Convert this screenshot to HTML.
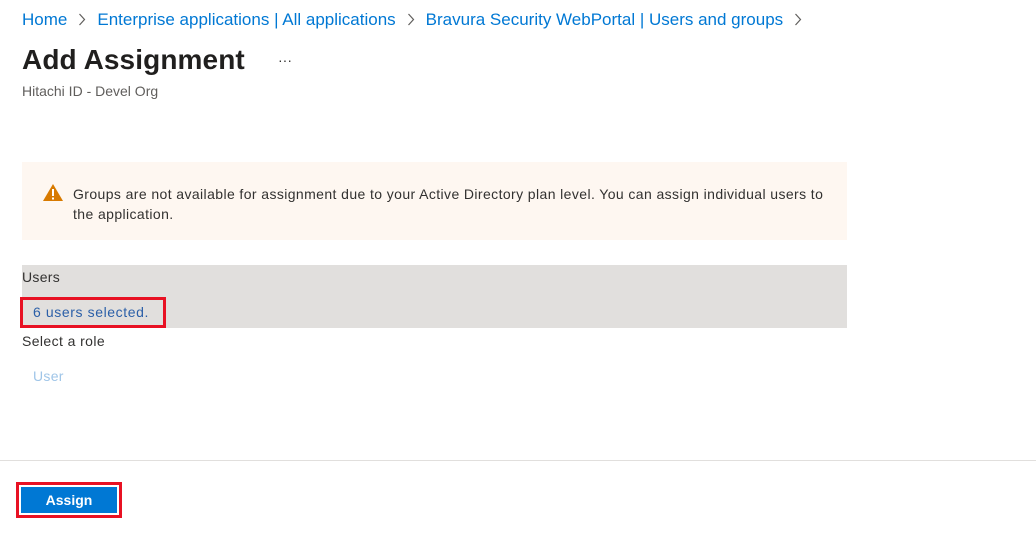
<!DOCTYPE html>
<html><head><style>
body{margin:0;width:1036px;height:540px;background:#fff;font-family:"Liberation Sans",sans-serif;position:relative;overflow:hidden;color:#323130}
.a{position:absolute;white-space:nowrap}
.c{display:inline-block;vertical-align:middle;margin:0 11px 3px 11px}
</style></head><body>
<div class="a" style="left:22px;top:10px;font-size:17px;color:#0078d4;">Home<svg class="c" width="8" height="13" viewBox="0 0 8 13"><path d="M1.5 1 L6.5 6.5 L1.5 12" fill="none" stroke="#605e5c" stroke-width="1.2"/></svg>Enterprise applications | All applications<svg class="c" width="8" height="13" viewBox="0 0 8 13"><path d="M1.5 1 L6.5 6.5 L1.5 12" fill="none" stroke="#605e5c" stroke-width="1.2"/></svg>Bravura Security WebPortal | Users and groups<svg class="c" width="8" height="13" viewBox="0 0 8 13"><path d="M1.5 1 L6.5 6.5 L1.5 12" fill="none" stroke="#605e5c" stroke-width="1.2"/></svg></div>
<div class="a" style="left:22px;top:44px;font-size:28px;font-weight:bold;color:#201f1e;letter-spacing:0.1px">Add Assignment</div>
<div class="a" style="left:278px;top:52px;font-size:14px;color:#323130">···</div>
<div class="a" style="left:22px;top:83px;font-size:14px;color:#605e5c">Hitachi ID - Devel Org</div>
<div class="a" style="left:22px;top:162px;width:825px;height:78px;background:#fef7f1"></div>
<svg class="a" style="left:42px;top:183px" width="22" height="19" viewBox="0 0 22 19"><path d="M11 1 L21 18 L1 18 Z" fill="#d87a00"/><rect x="10" y="6" width="2" height="7" fill="#fff"/><rect x="10" y="14.5" width="2" height="2" fill="#fff"/></svg>
<div class="a" style="left:73px;top:184px;font-size:14px;line-height:20px;color:#323130;letter-spacing:0.4px">Groups are not available for assignment due to your Active Directory plan level. You can assign individual users to<br>the application.</div>
<div class="a" style="left:22px;top:265px;width:825px;height:63px;background:#e1dfdd"></div>
<div class="a" style="left:22px;top:269px;font-size:14px;letter-spacing:0.3px">Users</div>
<div class="a" style="left:20px;top:297px;width:140px;height:25px;border:3px solid #e81123"></div>
<div class="a" style="left:33px;top:304px;font-size:14px;color:#2b5fa8;letter-spacing:0.6px">6 users selected.</div>
<div class="a" style="left:22px;top:333px;font-size:14px;letter-spacing:0.4px">Select a role</div>
<div class="a" style="left:33px;top:368px;font-size:14px;color:#9fc5e8;letter-spacing:0.3px">User</div>
<div class="a" style="left:0;top:460px;width:1036px;height:1px;background:#e1dfdd"></div>
<div class="a" style="left:16px;top:482px;width:100px;height:30px;border:3px solid #e81123"></div>
<div class="a" style="left:21px;top:487px;width:96px;height:26px;background:#0078d4;color:#fff;font-size:14px;font-weight:bold;text-align:center;line-height:26px">Assign</div>
</body></html>
